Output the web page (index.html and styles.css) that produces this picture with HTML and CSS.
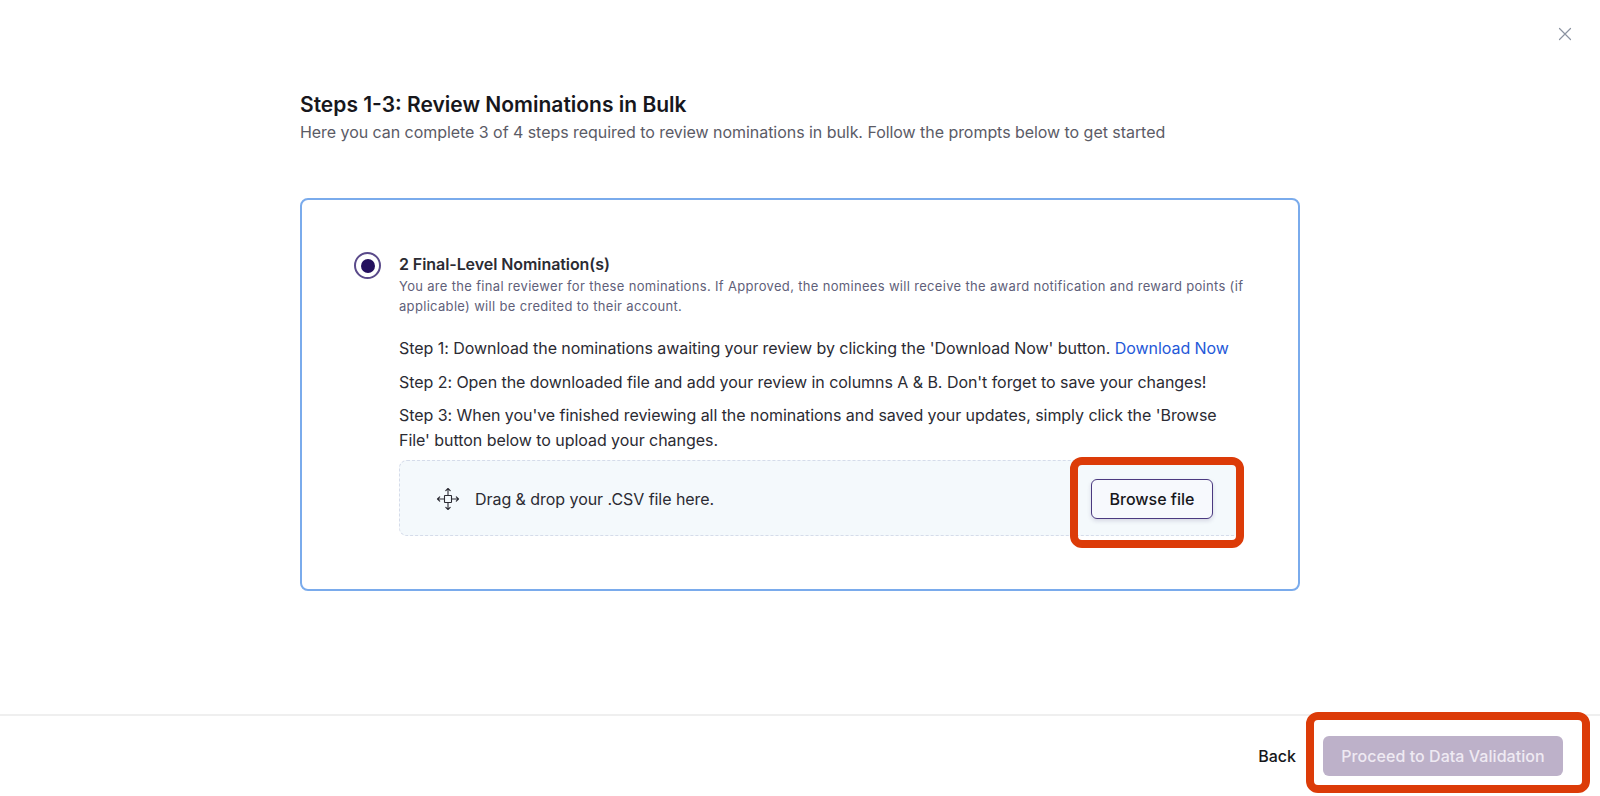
FILE: index.html
```html
<!DOCTYPE html>
<html lang="en">
<head>
  <meta charset="utf-8"/>
  <meta name="viewport" content="width=device-width, initial-scale=1.0"/>
  <title>Review Nominations in Bulk</title>
  <link rel="stylesheet" href="styles.css">
</head>
<body>
  <div class="top-bar">
    <button class="close-btn" title="Close">
      <svg width="14" height="14" viewBox="0 0 14 14" fill="none" stroke="#8b93a1" stroke-width="1.2" stroke-linecap="round"><path d="M1.5 1.5l11 11M12.5 1.5l-11 11"/></svg>
    </button>
  </div>
  <main class="content">
    <h1>Steps 1-3: Review Nominations in Bulk</h1>
    <p class="subtitle">Here you can complete 3 of 4 steps required to review nominations in bulk. Follow the prompts below to get started</p>
    <section class="card">
      <div class="radio"><span></span></div>
      <div class="card-body">
        <h2>2 Final-Level Nomination(s)</h2>
        <p class="hint">You are the final reviewer for these nominations. If Approved, the nominees will receive the award notification and reward points (if applicable) will be credited to their account.</p>
        <p class="step step-first">Step 1: Download the nominations awaiting your review by clicking the 'Download Now' button. <a href="#">Download Now</a></p>
        <p class="step">Step 2: Open the downloaded file and add your review in columns A &amp; B. Don't forget to save your changes!</p>
        <p class="step">Step 3: When you've finished reviewing all the nominations and saved your updates, simply click the 'Browse File' button below to upload your changes.</p>
        <div class="dropzone">
          <svg class="move-icon" width="24" height="24" viewBox="0 0 24 24" fill="none" stroke="#2b2b33" stroke-width="1.1" stroke-linecap="round" stroke-linejoin="round">
            <rect x="8.5" y="8.5" width="7" height="7" rx="0.5"/>
            <path d="M12 8.5V1.5M9.8 3.7L12 1.5l2.2 2.2M12 15.5v7M9.8 20.3l2.2 2.2 2.2-2.2M8.5 12H1.5M3.7 9.8L1.5 12l2.2 2.2M15.5 12h7M20.3 9.8l2.2 2.2-2.2 2.2"/>
          </svg>
          <span>Drag &amp; drop your .CSV file here.</span>
          <button class="browse-btn">Browse file</button>
          <div class="callout callout-browse"></div>
        </div>
      </div>
    </section>
  </main>
  <footer>
    <button class="back-btn">Back</button>
    <button class="proceed-btn" disabled>Proceed to Data Validation</button>
    <div class="callout callout-proceed"></div>
  </footer>
</body>
</html>
```

FILE: styles.css
```css
html, body { margin: 0; padding: 0; background: #fff; height: 100%; overflow: hidden; font-family: Inter, "Liberation Sans", sans-serif; }
body { height: 796px; display: flex; flex-direction: column; color: #1c1c22; }
button { font-family: inherit; }
.top-bar { display: flex; justify-content: flex-end; padding: 27px 28px 0 0; height: 65px; box-sizing: border-box; }
.close-btn { background: none; border: none; padding: 0; width: 14px; height: 14px; cursor: pointer; display: flex; }
.content { flex: 1; width: 1000px; margin-left: 300px; }
h1 { margin: 28px 0 0 0; font-size: 21px; line-height: 24px; font-weight: 600; color: #17171c; }
.subtitle { margin: 3px 0 0 0; font-size: 16px; line-height: 24px; color: #5b5b66; letter-spacing: -0.05px; }
.card { margin-top: 54px; height: 393px; box-sizing: border-box; border: 2px solid #7aabec; border-radius: 8px; padding: 52px 54px 0 52px; display: flex; gap: 18px; }
.radio { width: 27px; height: 27px; box-sizing: border-box; border: 2px solid #5a4a8a; border-radius: 50%; display: flex; align-items: center; justify-content: center; flex-shrink: 0; }
.radio span { width: 14px; height: 14px; border-radius: 50%; background: #24105e; }
.card-body { flex: 1; min-width: 0; }
h2 { margin: 2px 0 0 0; font-size: 16px; line-height: 20px; font-weight: 600; color: #2b2b33; letter-spacing: -0.07px; }
.hint { margin: 2px 0 0 0; font-size: 13px; line-height: 20px; color: #5f5f7a; letter-spacing: 0.32px; }
.step { margin: 8.5px 0 0 0; font-size: 16px; line-height: 25px; color: #2b2b33; letter-spacing: -0.05px; }
.step-first { margin-top: 20px; }
.step a { color: #2458d8; text-decoration: none; }
.dropzone { position: relative; margin-top: 7px; height: 76px; box-sizing: border-box; border: 1px dashed #d5dcea; border-radius: 8px; background: #f4f9fc; display: flex; align-items: center; padding: 1px 30px 0 36px; font-size: 16px; color: #2b2b33; letter-spacing: -0.05px; }
.move-icon { margin-right: 15px; flex-shrink: 0; }
.browse-btn { margin-left: auto; width: 122px; height: 40px; background: #f7f9fd; border: 1px solid #4b3a80; border-radius: 6px; font-size: 16px; font-weight: 500; color: #17171c; box-shadow: 0 2px 4px rgba(40, 30, 90, 0.15); cursor: pointer; }
footer { position: relative; height: 82px; box-sizing: border-box; border-top: 2px solid #efefef; display: flex; align-items: center; justify-content: flex-end; gap: 27px; padding: 0 37px 0 0; }
.back-btn { background: none; border: none; padding: 0; font-size: 16px; font-weight: 500; color: #17171c; cursor: pointer; }
.proceed-btn { width: 240px; height: 40px; border: none; border-radius: 6px; background: #bdb1c9; color: #efeaf3; font-size: 16px; font-weight: 500; letter-spacing: 0.05px; }
.callout { position: absolute; box-sizing: border-box; border: 8px solid #dc3b08; border-radius: 12px; pointer-events: none; }
.callout-browse { right: -1px; top: -4px; width: 174px; height: 91px; }
.callout-proceed { right: 10px; top: -4px; width: 284px; height: 81px; }
```
